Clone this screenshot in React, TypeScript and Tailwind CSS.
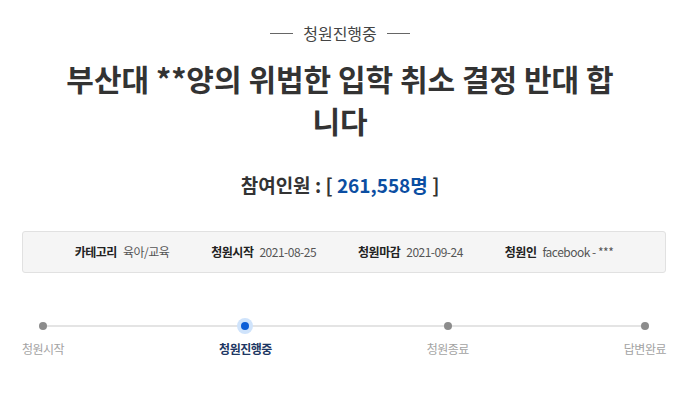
import React from 'react';

const INFO = [
  { label: '카테고리', value: '육아/교육' },
  { label: '청원시작', value: '2021-08-25' },
  { label: '청원마감', value: '2021-09-24' },
  { label: '청원인', value: 'facebook - ***' },
];

const STEPS = [
  { name: '청원시작', active: false },
  { name: '청원진행중', active: true },
  { name: '청원종료', active: false },
  { name: '답변완료', active: false },
];

export default function App() {
  return (
    <div className="w-[680px] h-[400px] bg-white text-[#333] font-['Noto_Sans_CJK_KR','Noto_Sans',sans-serif] flex flex-col overflow-hidden">

      {/* status tag */}
      <div className="mt-[23px] h-[20px] flex items-center justify-center gap-[10px]">
        <span className="w-[23px] h-px bg-[#666]"></span>
        <span className="text-[16px] leading-[20px] text-[#444]">청원진행중</span>
        <span className="w-[23px] h-px bg-[#666]"></span>
      </div>

      {/* title */}
      <h1 className="mt-[14px] w-[566px] mx-auto text-center text-[30px] leading-[42px] font-bold text-[#333]">
        부산대 **양의 위법한 입학 취소 결정 반대 합니다
      </h1>

      {/* count */}
      <div className="mt-[30px] text-center text-[19px] leading-[28px] font-bold text-[#333]">
        참여인원 : [ <span className="text-[#0b4ea2]">261,558명</span> ]
      </div>

      {/* info box */}
      <div className="mt-[32px] ml-[22px] mr-[14px] h-[42px] rounded-[3px] border border-[#e1e1e1] bg-[#f5f5f5] flex items-center justify-center gap-[42px] text-[12px] tracking-[-0.5px]">
        {INFO.map((it) => (
          <div key={it.label} className="flex items-center gap-[6px]">
            <span className="font-bold text-[#222]">{it.label}</span>
            <span className="text-[#555]">{it.value}</span>
          </div>
        ))}
      </div>

      {/* progress */}
      <div className="relative mt-[45px] ml-[22px] mr-[14px] flex justify-between">
        <div className="absolute left-[21px] right-[21px] top-[7px] h-[2px] bg-[#e4e4e4]"></div>
        {STEPS.map((s) => (
          <div key={s.name} className="relative flex flex-col items-center">
            <div className="h-[16px] flex items-center justify-center">
              {s.active ? (
                <span className="w-[8px] h-[8px] rounded-full bg-[#0b5ed7] shadow-[0_0_0_4px_#cfe3fb]"></span>
              ) : (
                <span className="w-[8px] h-[8px] rounded-full bg-[#8c8c8c]"></span>
              )}
            </div>
            <span
              className={
                s.active
                  ? 'mt-[6px] text-[12px] leading-[18px] tracking-[-0.5px] font-bold text-[#1d3763]'
                  : 'mt-[6px] text-[12px] leading-[18px] tracking-[-0.5px] text-[#a3a3a3]'
              }
            >
              {s.name}
            </span>
          </div>
        ))}
      </div>
    </div>
  );
}
